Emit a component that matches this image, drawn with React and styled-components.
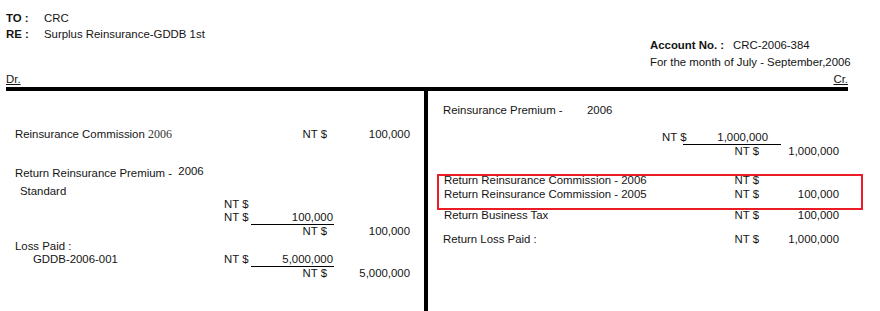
import React from "react";
import styled, { createGlobalStyle } from "styled-components";

const Global = createGlobalStyle`
  html, body { margin: 0; padding: 0; background: #fff; }
  body { font-family: "Liberation Sans", Arial, sans-serif; }
`;

const Page = styled.div`
  width: 842px;
  padding-left: 6px;
  font-family: "Liberation Sans", Arial, sans-serif;
  font-size: 11.4px;
  color: #141414;
  height: 311px;
  overflow: visible;
`;

const Header = styled.div`
  display: grid;
  grid-template-columns: 644px auto;
  align-items: start;
`;

const InfoBlock = styled.div`
  padding-top: ${(p) => p.$top}px;
  line-height: ${(p) => p.$lh}px;
`;

const InfoRow = styled.div`
  display: flex;
  white-space: nowrap;
`;

const InfoLabel = styled.span`
  font-weight: bold;
  width: ${(p) => p.$w}px;
  flex: none;
`;

const SideRow = styled.div`
  display: flex;
  justify-content: space-between;
  margin-top: 1px;
  line-height: 15px;
  text-decoration: underline;
`;

const Rule = styled.div`
  height: 4px;
  background: #000;
`;

const Columns = styled.div`
  display: grid;
  grid-template-columns: 422px 1fr;
  height: 220px;
`;

const Side = styled.div`
  position: relative;
  line-height: 13px;
  padding-left: ${(p) => p.$pl}px;
  padding-top: ${(p) => p.$pt}px;
  border-right: ${(p) => (p.$divider ? "4px solid #000" : "none")};
  --cols: ${(p) => p.$cols};
  --subpad: ${(p) => p.$subpad}px;
  --totpad: ${(p) => p.$totpad}px;
`;

const Row = styled.div`
  display: grid;
  grid-template-columns: var(--cols);
  margin-top: ${(p) => p.$mt || 0}px;
  white-space: nowrap;
`;

const Label = styled.div`
  grid-column: 1;
  padding-left: ${(p) => p.$indent || 0}px;
`;

const LabelText = styled.span`
  display: inline-block;
  width: ${(p) => (p.$w ? `${p.$w}px` : "auto")};
`;

const Year = styled.span`
  font-family: ${(p) => (p.$serif ? '"Liberation Serif", "Times New Roman", serif' : "inherit")};
  font-size: ${(p) => (p.$serif ? "12px" : "inherit")};
  color: ${(p) => (p.$serif ? "#333" : "inherit")};
  vertical-align: ${(p) => (p.$raised ? "2px" : "baseline")};
`;

const SubNT = styled.div`
  grid-column: 2;
`;

const SubAmt = styled.div`
  grid-column: 3;
  text-align: right;
  padding-right: var(--subpad);
  border-bottom: 1px solid #000;
`;

const TotNT = styled.div`
  grid-column: 3;
  text-align: right;
  padding-right: var(--totpad);
`;

const Amount = styled.div`
  grid-column: 4;
  text-align: right;
`;

const Highlight = styled.div`
  position: absolute;
  left: 9px;
  top: 83px;
  width: 426px;
  height: 36px;
  box-sizing: border-box;
  border: 2px solid #ec1c24;
  pointer-events: none;
`;

export default function App() {
  return (
    <>
      <Global />
      <Page>
        <Header>
          <InfoBlock $top={10} $lh={16}>
            <InfoRow>
              <InfoLabel $w={38}>TO :</InfoLabel>
              <span>CRC</span>
            </InfoRow>
            <InfoRow>
              <InfoLabel $w={38}>RE :</InfoLabel>
              <span>Surplus Reinsurance-GDDB 1st</span>
            </InfoRow>
          </InfoBlock>
          <InfoBlock $top={37} $lh={17}>
            <InfoRow>
              <InfoLabel $w={83}>Account No. :</InfoLabel>
              <span>CRC-2006-384</span>
            </InfoRow>
            <InfoRow>For the month of July - September,2006</InfoRow>
          </InfoBlock>
        </Header>
        <SideRow>
          <span>Dr.</span>
          <span>Cr.</span>
        </SideRow>
        <Rule />
        <Columns>
          <Side $divider $pl={9} $pt={37} $cols="209px 27px 83px 76px" $subpad={1} $totpad={7}>
            <Row>
              <Label>
                Reinsurance Commission <Year $serif>2006</Year>
              </Label>
              <TotNT>NT $</TotNT>
              <Amount>100,000</Amount>
            </Row>
            <Row $mt={24}>
              <Label>
                Return Reinsurance Premium -&nbsp; <Year $raised>2006</Year>
              </Label>
            </Row>
            <Row $mt={5}>
              <Label $indent={5}>Standard</Label>
            </Row>
            <Row>
              <SubNT>NT $</SubNT>
            </Row>
            <Row>
              <SubNT>NT $</SubNT>
              <SubAmt>100,000</SubAmt>
            </Row>
            <Row>
              <TotNT>NT $</TotNT>
              <Amount>100,000</Amount>
            </Row>
            <Row $mt={2}>
              <Label>Loss Paid :</Label>
            </Row>
            <Row>
              <Label $indent={18}>GDDB-2006-001</Label>
              <SubNT>NT $</SubNT>
              <SubAmt>5,000,000</SubAmt>
            </Row>
            <Row>
              <TotNT>NT $</TotNT>
              <Amount>5,000,000</Amount>
            </Row>
          </Side>
          <Side $pl={15} $pt={13} $cols="219px 21px 98px 58px" $subpad={13} $totpad={22}>
            <Row>
              <Label>
                <LabelText $w={144}>Reinsurance Premium -</LabelText>
                <Year>2006</Year>
              </Label>
            </Row>
            <Row $mt={14}>
              <SubNT>NT $</SubNT>
              <SubAmt>1,000,000</SubAmt>
            </Row>
            <Row>
              <TotNT>NT $</TotNT>
              <Amount>1,000,000</Amount>
            </Row>
            <Row $mt={16}>
              <Label $indent={1}>Return Reinsurance Commission - 2006</Label>
              <TotNT>NT $</TotNT>
            </Row>
            <Row $mt={1}>
              <Label $indent={1}>Return Reinsurance Commission - 2005</Label>
              <TotNT>NT $</TotNT>
              <Amount>100,000</Amount>
            </Row>
            <Row $mt={8}>
              <Label $indent={1}>Return Business Tax</Label>
              <TotNT>NT $</TotNT>
              <Amount>100,000</Amount>
            </Row>
            <Row $mt={11}>
              <Label $indent={-1}>Return Loss Paid :</Label>
              <TotNT>NT $</TotNT>
              <Amount>1,000,000</Amount>
            </Row>
            <Highlight />
          </Side>
        </Columns>
      </Page>
    </>
  );
}
